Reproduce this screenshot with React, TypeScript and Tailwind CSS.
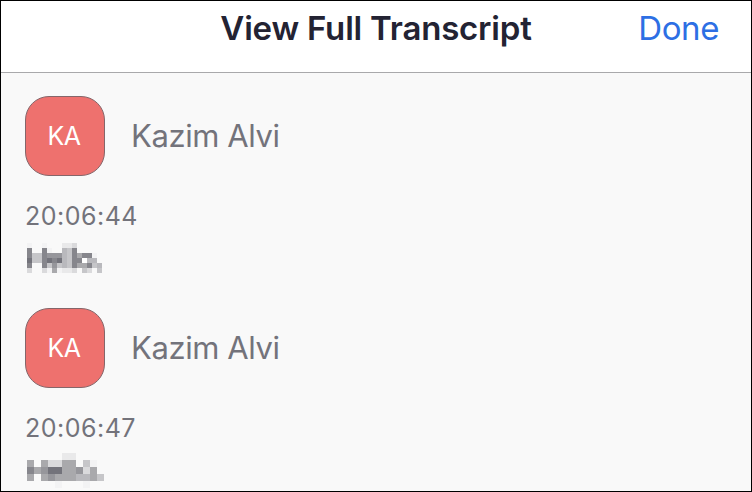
import React from 'react';

type Mosaic = {
  size: number;
  offset: string;
  rows: string[];
};

type Message = {
  id: number;
  name: string;
  initials: string;
  time: string;
  mosaic: Mosaic;
};

// Shades used by the pixelated message text, light to dark
const shades: Record<string, string> = {
  a: '#f3f3f4',
  b: '#e9e9ea',
  c: '#dadadc',
  d: '#c6c6c9',
  e: '#b9b9bd',
  f: '#a9a9ac',
  g: '#96969b',
  h: '#86868c',
  i: '#73737b',
  w: '#ffffff',
};

const messages: Message[] = [
  {
    id: 1,
    name: 'Kazim Alvi',
    initials: 'KA',
    time: '20:06:44',
    mosaic: {
      size: 5,
      offset: 'mt-[11px]',
      rows: [
        'a..a...bbc.....',
        'h..ha..edh.....',
        'hddhgggedhfhha.',
        'iddhihiedhhwee.',
        'h..hdgdedhffhde',
        'c..cafabbc.dc.d',
      ],
    },
  },
  {
    id: 2,
    name: 'Kazim Alvi',
    initials: 'KA',
    time: '20:06:47',
    mosaic: {
      size: 7,
      offset: 'mt-[9px]',
      rows: [
        '.....bb....',
        'f.fccff.da.',
        'hfgiiffgcf.',
        'f.fgfffeefd',
        '....a...a..',
      ],
    },
  },
];

const MosaicText = ({ mosaic }: { mosaic: Mosaic }) => {
  const { size, rows, offset } = mosaic;
  const width = rows[0].length * size;
  const height = rows.length * size;

  return (
    <svg
      className={`ml-0.5 block shrink-0 ${offset}`}
      width={width}
      height={height}
      viewBox={`0 0 ${width} ${height}`}
      shapeRendering="crispEdges"
      role="img"
      aria-label="Hello."
    >
      {rows.map((row, y) =>
        row
          .split('')
          .map((key, x) =>
            shades[key] ? (
              <rect
                key={`${x}-${y}`}
                x={x * size}
                y={y * size}
                width={size}
                height={size}
                fill={shades[key]}
              />
            ) : null
          )
      )}
    </svg>
  );
};

const App = () => {
  return (
    <main className="flex h-[492px] w-[752px] flex-col overflow-hidden border border-black bg-[#f9f9f9] font-['Inter',sans-serif]">
      <header className="grid h-[72px] shrink-0 grid-cols-[1fr_auto_1fr] items-start border-b border-[#a9a9ab] bg-white pt-[7px]">
        <span></span>
        <h1 className="text-[33px] leading-10 font-semibold tracking-[-0.2px] text-[#232333]">
          View Full Transcript
        </h1>
        <button className="mr-8 justify-self-end text-[33px] leading-10 tracking-[-0.4px] text-[#2d6fe4]">
          Done
        </button>
      </header>

      <div className="flex flex-col px-6 pt-[23px]">
        {messages.map((message) => (
          <article key={message.id} className="h-[212px] shrink-0">
            <div className="flex items-center gap-[26px]">
              <div className="flex size-20 items-center justify-center rounded-3xl border border-[#85666a] bg-[#ee716e] pt-0.5 pr-0.5 text-[25px] text-white">
                <span className="tracking-[-0.4px]">{message.initials}</span>
              </div>
              <h2 className="pb-px text-[31px] leading-10 tracking-[-0.4px] text-[#73737b]">
                {message.name}
              </h2>
            </div>
            <p className="mt-6 text-[25px] leading-8 tracking-[0.5px] text-[#73737b]">
              {message.time}
            </p>
            <MosaicText mosaic={message.mosaic} />
          </article>
        ))}
      </div>
    </main>
  );
};

export default App;
